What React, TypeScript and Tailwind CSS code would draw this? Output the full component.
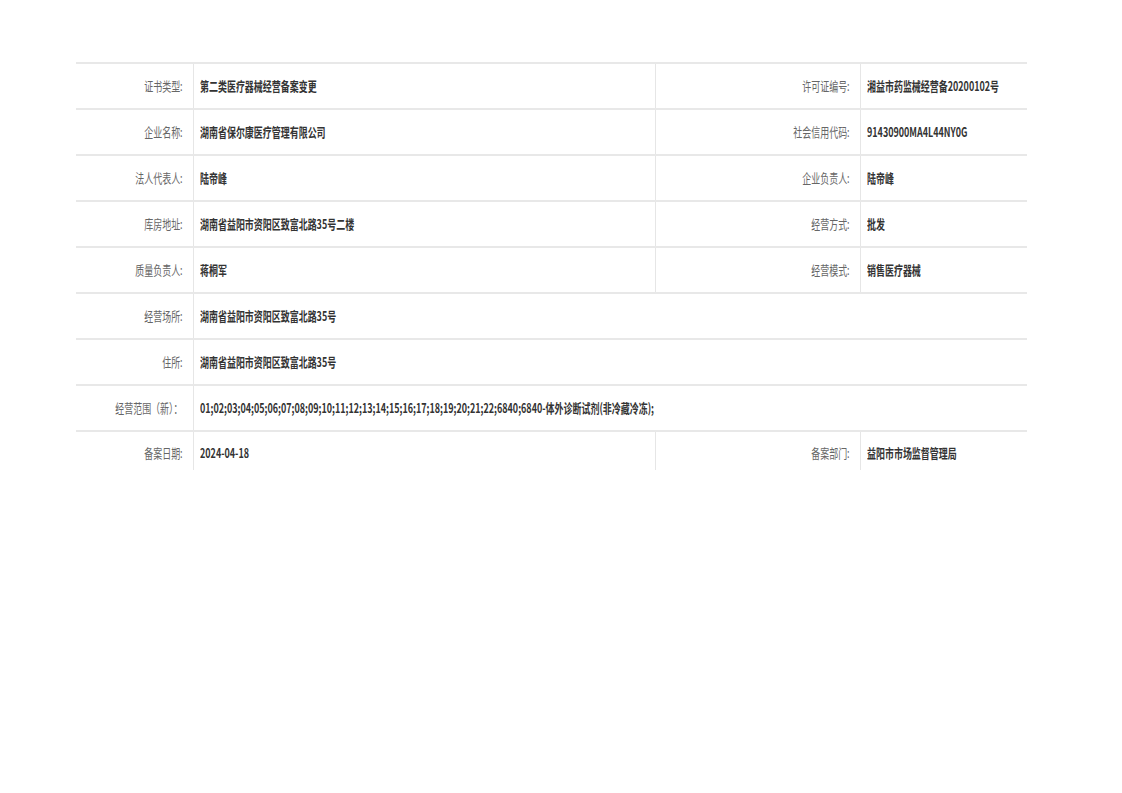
const rows: { label: string; value: string; label2?: string; value2?: string }[] = [
  { label: '证书类型:', value: '第二类医疗器械经营备案变更', label2: '许可证编号:', value2: '湘益市药监械经营备20200102号' },
  { label: '企业名称:', value: '湖南省保尔康医疗管理有限公司', label2: '社会信用代码:', value2: '91430900MA4L44NY0G' },
  { label: '法人代表人:', value: '陆帝峰', label2: '企业负责人:', value2: '陆帝峰' },
  { label: '库房地址:', value: '湖南省益阳市资阳区致富北路35号二楼', label2: '经营方式:', value2: '批发' },
  { label: '质量负责人:', value: '蒋桐军', label2: '经营模式:', value2: '销售医疗器械' },
  { label: '经营场所:', value: '湖南省益阳市资阳区致富北路35号' },
  { label: '住所:', value: '湖南省益阳市资阳区致富北路35号' },
  {
    label: '经营范围（新）：',
    value: '01;02;03;04;05;06;07;08;09;10;11;12;13;14;15;16;17;18;19;20;21;22;6840;6840-体外诊断试剂(非冷藏冷冻);',
  },
  { label: '备案日期:', value: '2024-04-18', label2: '备案部门:', value2: '益阳市市场监督管理局' },
]

function Label({ text, divider = false }: { text: string; divider?: boolean }) {
  return (
    <div
      className={`flex items-center justify-end pr-[10px] text-[#666] ${
        divider ? 'border-l border-[#e6e6e6]' : ''
      }`}
    >
      <span className="inline-block origin-right scale-x-[0.69] whitespace-nowrap">{text}</span>
    </div>
  )
}

function Value({ text, wide = false }: { text: string; wide?: boolean }) {
  return (
    <div
      className={`flex items-center border-l border-[#e6e6e6] pl-[6px] font-semibold text-[#333] ${
        wide ? 'col-span-3' : ''
      }`}
    >
      <span className="inline-block origin-left scale-x-[0.69] whitespace-nowrap">{text}</span>
    </div>
  )
}

export default function App() {
  return (
    <div className="min-h-[793px] w-full bg-white pt-[62px] pl-[76px] font-['Noto_Sans_CJK_SC',sans-serif] text-[13px]">
      <div className="w-[951px]">
        {rows.map((row, i) => (
          <div
            key={row.label}
            className={`grid grid-cols-[117px_462px_205px_167px] border-t-2 border-[#e8e8e8] ${
              i === rows.length - 1 ? 'h-[40px] [&>div]:items-start [&>div]:pt-[11px]' : 'h-[46px]'
            }`}
          >
            <Label text={row.label} />
            {row.label2 ? (
              <>
                <Value text={row.value} />
                <Label text={row.label2} divider />
                <Value text={row.value2 ?? ''} />
              </>
            ) : (
              <Value text={row.value} wide />
            )}
          </div>
        ))}
      </div>
    </div>
  )
}
